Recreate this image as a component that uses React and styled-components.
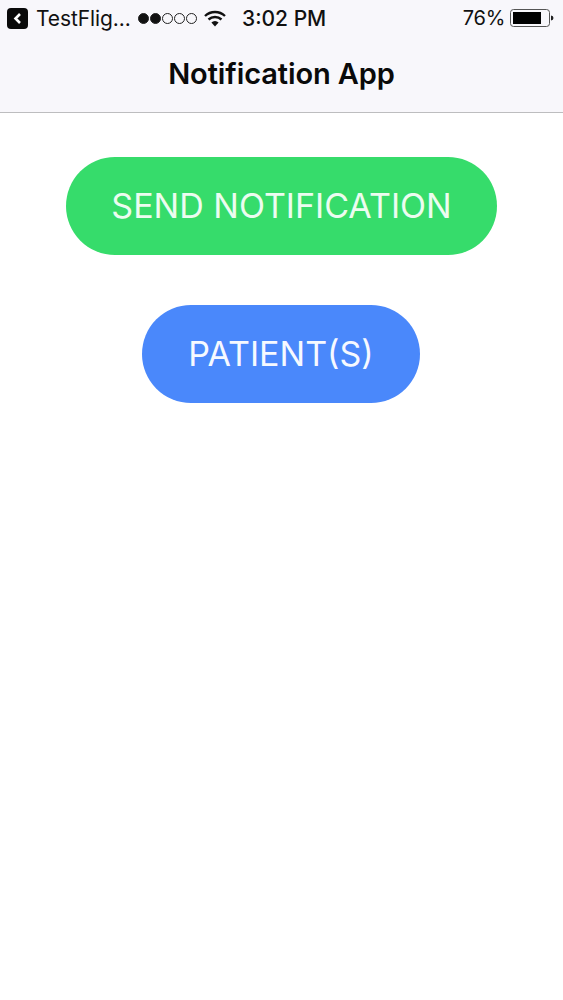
import styled, { createGlobalStyle } from 'styled-components';

const GlobalStyle = createGlobalStyle`
  html, body {
    margin: 0;
    padding: 0;
    background: #ffffff;
    font-family: Inter, "Liberation Sans", sans-serif;
  }
`;

const Page = styled.div`
  width: 563px;
  height: 1000px;
  display: flex;
  flex-direction: column;
  overflow: hidden;
`;

const Header = styled.header`
  height: 112px;
  background: #f8f7fb;
  border-bottom: 1px solid #bdbdbf;
  display: flex;
  flex-direction: column;
`;

const StatusBar = styled.div`
  height: 36px;
  display: flex;
  align-items: center;
  padding: 0 9px 0 7px;
  color: #111;
  font-size: 20px;
`;

const BackBadge = styled.div`
  width: 21px;
  height: 21px;
  border-radius: 4px;
  background: #0a0a0a;
  display: flex;
  align-items: center;
  justify-content: center;
  margin-right: 8px;
`;

const Carrier = styled.span`
  width: 102px;
  font-size: 21px;
  font-weight: 400;
  letter-spacing: -0.1px;
`;

const Signal = styled.div`
  display: flex;
  gap: 1px;
  width: 66px;
  align-items: center;
`;

const Dot = styled.span`
  width: 11px;
  height: 11px;
  border-radius: 50%;
  box-sizing: border-box;
  border: 1px solid #222;
  background: ${(props) => (props.$on ? '#111' : 'transparent')};
`;

const Time = styled.span`
  margin-left: 16px;
  font-size: 21px;
  font-weight: 500;
  flex: 1;
`;

const Percent = styled.span`
  margin-right: 5px;
  letter-spacing: -0.3px;
`;

const TitleRow = styled.div`
  flex: 1;
  display: flex;
  align-items: center;
  justify-content: center;
  padding-bottom: 1px;
`;

const Title = styled.h1`
  margin: 0;
  font-size: 29px;
  font-weight: 600;
  color: #0a0a0a;
  letter-spacing: -0.1px;
`;

const Content = styled.main`
  flex: 1;
  display: flex;
  flex-direction: column;
  align-items: center;
  gap: 50px;
  padding-top: 44px;
`;

const PillButton = styled.button`
  height: 98px;
  width: ${(props) => props.$width}px;
  margin-right: ${(props) => props.$nudge || 0}px;
  border: none;
  border-radius: 49px;
  background: ${(props) => props.$color};
  color: ${(props) => props.$text};
  font-family: inherit;
  font-size: 34px;
  font-weight: 400;
  padding: 0 0 2px;
`;

function WifiIcon() {
  return (
    <svg width="22" height="17" viewBox="0 0 22 17">
      <path d="M1 6 A14.5 14.5 0 0 1 21 6" fill="none" stroke="#111" strokeWidth="2.4" />
      <path d="M4.5 9.5 A9.5 9.5 0 0 1 17.5 9.5" fill="none" stroke="#111" strokeWidth="2.4" />
      <path d="M11 16.5 L7.4 12.6 A5 5 0 0 1 14.6 12.6 Z" fill="#111" />
    </svg>
  );
}

function BatteryIcon() {
  return (
    <svg width="44" height="18" viewBox="0 0 44 18">
      <rect x="0.5" y="0.5" width="39" height="17" rx="3" fill="none" stroke="#555" />
      <rect x="3" y="3" width="28" height="12" fill="#000" />
      <path d="M41 6.5 A2.5 2.5 0 0 1 41 11.5 Z" fill="#222" />
    </svg>
  );
}

function App() {
  return (
    <Page>
      <GlobalStyle />
      <Header>
        <StatusBar>
          <BackBadge>
            <svg width="11" height="13" viewBox="0 0 11 13">
              <path d="M8 2 L3.5 6.5 L8 11" fill="none" stroke="#fff" strokeWidth="2.6" />
            </svg>
          </BackBadge>
          <Carrier>TestFlig...</Carrier>
          <Signal>
            <Dot $on />
            <Dot $on />
            <Dot />
            <Dot />
            <Dot />
          </Signal>
          <WifiIcon />
          <Time>3:02 PM</Time>
          <Percent>76%</Percent>
          <BatteryIcon />
        </StatusBar>
        <TitleRow>
          <Title>Notification App</Title>
        </TitleRow>
      </Header>
      <Content>
        <PillButton $width={431} $color="#36dc6b" $text="#ecfcf0">SEND NOTIFICATION</PillButton>
        <PillButton $width={278} $nudge={1} $color="#4a88fb" $text="#f6f9ff">PATIENT(S)</PillButton>
      </Content>
    </Page>
  );
}

export default App;
